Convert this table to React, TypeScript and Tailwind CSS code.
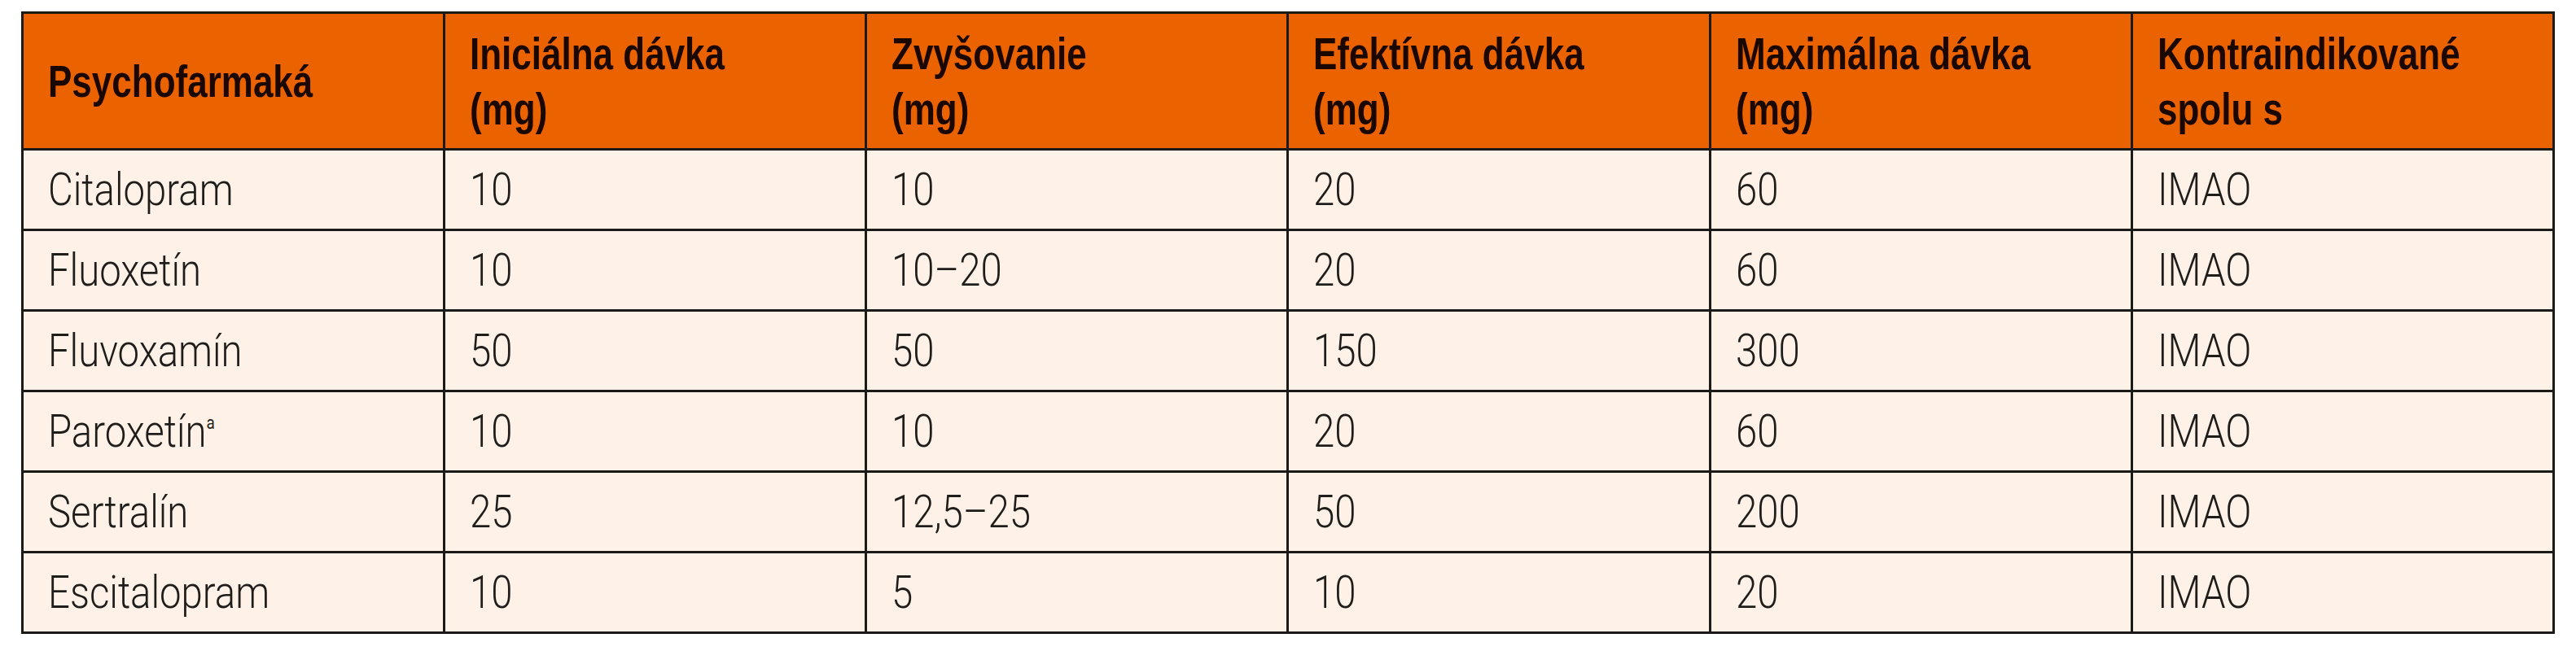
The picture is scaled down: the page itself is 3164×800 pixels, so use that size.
import React from 'react';

type Row = {
  name: string;
  sup?: string;
  cells: string[];
};

const headers = [
  ['Psychofarmaká'],
  ['Iniciálna dávka', '(mg)'],
  ['Zvyšovanie', '(mg)'],
  ['Efektívna dávka', '(mg)'],
  ['Maximálna dávka', '(mg)'],
  ['Kontraindikované', 'spolu s'],
];

const rows: Row[] = [
  { name: 'Citalopram', cells: ['10', '10', '20', '60', 'IMAO'] },
  { name: 'Fluoxetín', cells: ['10', '10–20', '20', '60', 'IMAO'] },
  { name: 'Fluvoxamín', cells: ['50', '50', '150', '300', 'IMAO'] },
  { name: 'Paroxetín', sup: 'a', cells: ['10', '10', '20', '60', 'IMAO'] },
  { name: 'Sertralín', cells: ['25', '12,5–25', '50', '200', 'IMAO'] },
  { name: 'Escitalopram', cells: ['10', '5', '10', '20', 'IMAO'] },
];

const headFont = { fontFamily: '"Liberation Sans", Arial, sans-serif' };
const bodyFont = { fontFamily: 'Roboto, "Liberation Sans", Arial, sans-serif' };

const cellBorder = 'border-[3px] border-[#1c1a17]';

export default function App() {
  return (
    <div className="w-[3164px] h-[800px] bg-white pt-[14px] pl-[26px]">
      <table className={`table-fixed border-collapse w-[3112px] ${cellBorder}`}>
        <thead>
          <tr className="h-[168px] bg-[#ea6300]">
            {headers.map((lines, i) => (
              <th
                key={i}
                className={`${cellBorder} pl-[30px] pr-2 text-left align-middle`}
                style={headFont}
              >
                <span className="inline-block origin-left scale-x-[0.8] whitespace-nowrap font-bold text-[55px] leading-[68px] text-[#1a0800]">
                  {lines.map((l, j) => (
                    <div key={j}>{l}</div>
                  ))}
                </span>
              </th>
            ))}
          </tr>
        </thead>
        <tbody>
          {rows.map((r) => (
            <tr key={r.name} className="h-[99px] bg-[#fef2e8]">
              {[r.name, ...r.cells].map((c, i) => (
                <td key={i} className={`${cellBorder} pl-[30px] align-middle`} style={bodyFont}>
                  <span className="inline-block origin-left scale-x-[0.86] whitespace-nowrap font-light text-[55px] leading-none text-[#1f1d1a]">
                    {c}
                    {i === 0 && r.sup && (
                      <span className="relative -top-[22px] text-[22px] font-normal">{r.sup}</span>
                    )}
                  </span>
                </td>
              ))}
            </tr>
          ))}
        </tbody>
      </table>
    </div>
  );
}
